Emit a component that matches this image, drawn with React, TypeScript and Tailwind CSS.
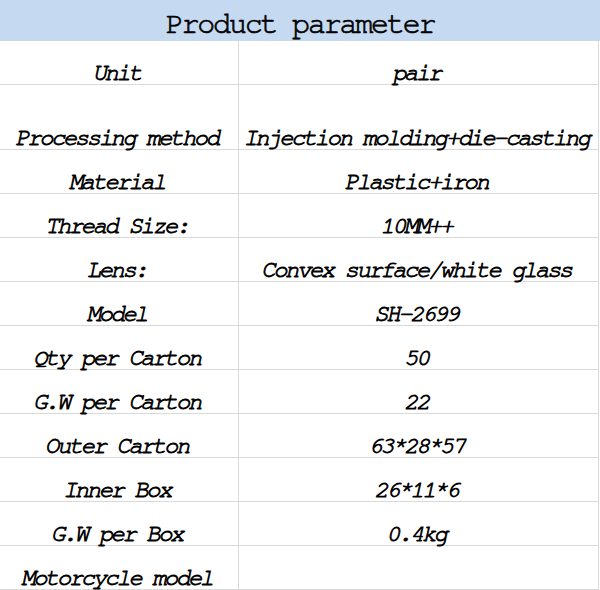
const rows: [string, string, string?][] = [
  ['Unit', 'pair', 'h-[44px]'],
  ['Processing method', 'Injection molding+die-casting', 'h-[65px]'],
  ['Material', 'Plastic+iron'],
  ['Thread Size:', '10MM++'],
  ['Lens:', 'Convex surface/white glass'],
  ['Model', 'SH-2699'],
  ['Qty per Carton', '50'],
  ['G.W per Carton', '22'],
  ['Outer Carton', '63*28*57'],
  ['Inner Box', '26*11*6'],
  ['G.W per Box', '0.4kg'],
  ['Motorcycle model', ''],
];

export default function App() {
  return (
    <div className="h-[590px] w-[600px] overflow-hidden bg-white font-['FreeMono','Liberation_Mono',monospace] text-black">
      <div className="flex h-[41px] items-center justify-center bg-[#c5d9f1] pt-[6px] text-[30px] leading-none tracking-[-2.2px] [-webkit-text-stroke:0.7px_black]">
        Product parameter
      </div>
      <div className="w-[599px] border-r border-[#d9d9d9]">
        {rows.map(([label, value, h]) => (
          <div key={label} className={`flex border-b border-[#d9d9d9] ${h ?? 'h-[44px]'}`}>
            <div className="flex w-[239px] items-end justify-center border-r border-[#d9d9d9] pr-[5px] pb-[1px] text-[24px] leading-[20px] italic tracking-[-2.5px] whitespace-nowrap [-webkit-text-stroke:0.8px_black]">
              {label}
            </div>
            <div className="flex flex-1 items-end justify-center pr-[5px] pb-[1px] text-[24px] leading-[20px] italic tracking-[-2.5px] whitespace-nowrap [-webkit-text-stroke:0.8px_black]">
              {value}
            </div>
          </div>
        ))}
      </div>
    </div>
  );
}
